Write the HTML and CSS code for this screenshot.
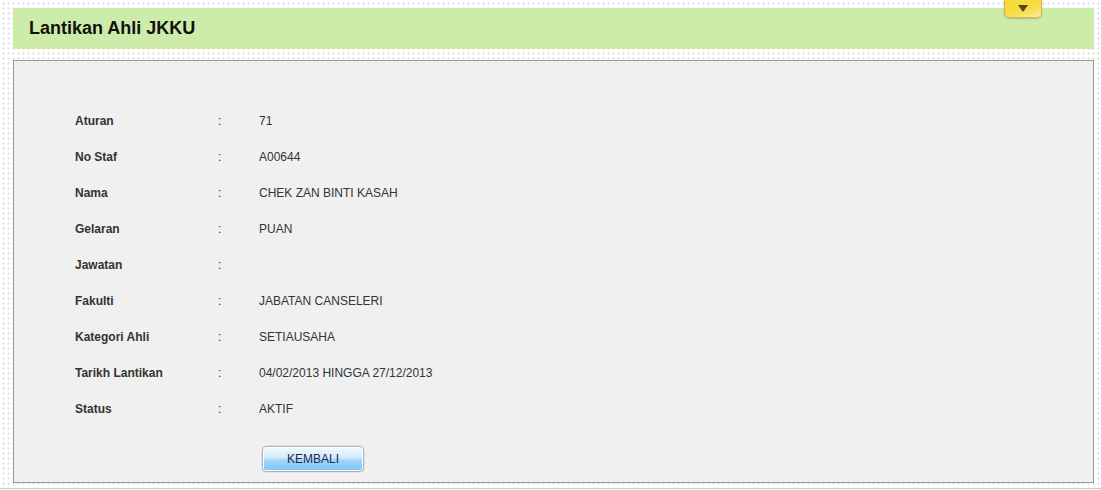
FILE: index.html
```html
<!DOCTYPE html>
<html lang="ms">
<head>
    <meta charset="UTF-8">
    <title>Lantikan Ahli JKKU</title>
    <link rel="stylesheet" href="styles.css">
</head>
<body>
    <div class="page">
        <div class="tab"><span class="arrow"></span></div>

        <div class="title-bar">
            <h2>Lantikan Ahli JKKU</h2>
        </div>

        <div class="panel">
            <div class="details">
                <div class="label">Aturan</div><div class="sep">:</div><div class="value">71</div>
                <div class="label">No Staf</div><div class="sep">:</div><div class="value">A00644</div>
                <div class="label">Nama</div><div class="sep">:</div><div class="value">CHEK ZAN BINTI KASAH</div>
                <div class="label">Gelaran</div><div class="sep">:</div><div class="value">PUAN</div>
                <div class="label">Jawatan</div><div class="sep">:</div><div class="value"></div>
                <div class="label">Fakulti</div><div class="sep">:</div><div class="value">JABATAN CANSELERI</div>
                <div class="label">Kategori Ahli</div><div class="sep">:</div><div class="value">SETIAUSAHA</div>
                <div class="label">Tarikh Lantikan</div><div class="sep">:</div><div class="value">04/02/2013 HINGGA 27/12/2013</div>
                <div class="label">Status</div><div class="sep">:</div><div class="value">AKTIF</div>
            </div>
            <div class="actions">
                <button class="btn">KEMBALI</button>
            </div>
        </div>

        <div class="footer"></div>
    </div>
</body>
</html>
```

FILE: styles.css
```css
html, body {
    height: 100%;
}

body {
    margin: 0;
    font-family: "Liberation Sans", Arial, sans-serif;
    font-size: 12px;
    color: #333;
    background-color: #fff;
    background-image: radial-gradient(circle, #e6e6e6 1px, transparent 1.2px);
    background-size: 5px 5px;
    background-position: 1px 1px;
    overflow: hidden;
}

.page {
    position: relative;
    padding: 8px 7px 0 13px;
}

/* little pull-down tab at the top right */
.tab {
    position: absolute;
    top: 0;
    left: 1004px;
    width: 38px;
    height: 18px;
    box-sizing: border-box;
    padding-top: 5px;
    border: 1px solid #cfb64a;
    border-top: none;
    border-radius: 0 0 5px 5px;
    background: linear-gradient(165deg, #f7d937 0%, #f8dc44 55%, #fcec9f 100%);
    box-shadow: 0 1px 2px rgba(0, 0, 0, 0.18);
    display: flex;
    justify-content: center;
}

.arrow {
    width: 0;
    height: 0;
    border-left: 5px solid transparent;
    border-right: 5px solid transparent;
    border-top: 7px solid #544718;
}

.title-bar {
    height: 41px;
    background: #cdeca9;
    display: flex;
    align-items: center;
    padding-left: 16px;
}

.title-bar h2 {
    margin: 0;
    font-size: 18px;
    font-weight: bold;
    color: #111;
}

.panel {
    margin-top: 11px;
    height: 423px;
    box-sizing: border-box;
    border: 1px solid #999;
    background: #f0f0f0;
    padding: 42px 0 0 61px;
}

.details {
    display: grid;
    grid-template-columns: 143px 41px 1fr;
    grid-auto-rows: 36px;
    align-items: center;
}

.label {
    font-weight: bold;
    color: #333;
}

.sep, .value {
    color: #333;
}

.actions {
    margin-top: 19px;
    padding-left: 187px;
}

.btn {
    width: 102px;
    height: 26px;
    padding: 0;
    font-family: "Liberation Sans", Arial, sans-serif;
    font-size: 12px;
    color: #1f2a44;
    border: 1px solid #a9b4bd;
    border-radius: 4px;
    background: linear-gradient(#f2f9fe 0%, #d2ebfc 45%, #9fd5fa 55%, #7cc5f6 100%);
    box-shadow: inset 0 0 0 1px #ffffff, 0 0 0 1px #e2e2e2;
    cursor: pointer;
}

.btn:hover {
    background: linear-gradient(#f8fcff 0%, #dff1fd 45%, #b0ddfb 55%, #8ccdf8 100%);
}

.footer {
    margin-top: 5px;
    margin-left: -13px;
    margin-right: -7px;
    border-top: 1px solid #c6ceda;
    height: 10px;
}
```
